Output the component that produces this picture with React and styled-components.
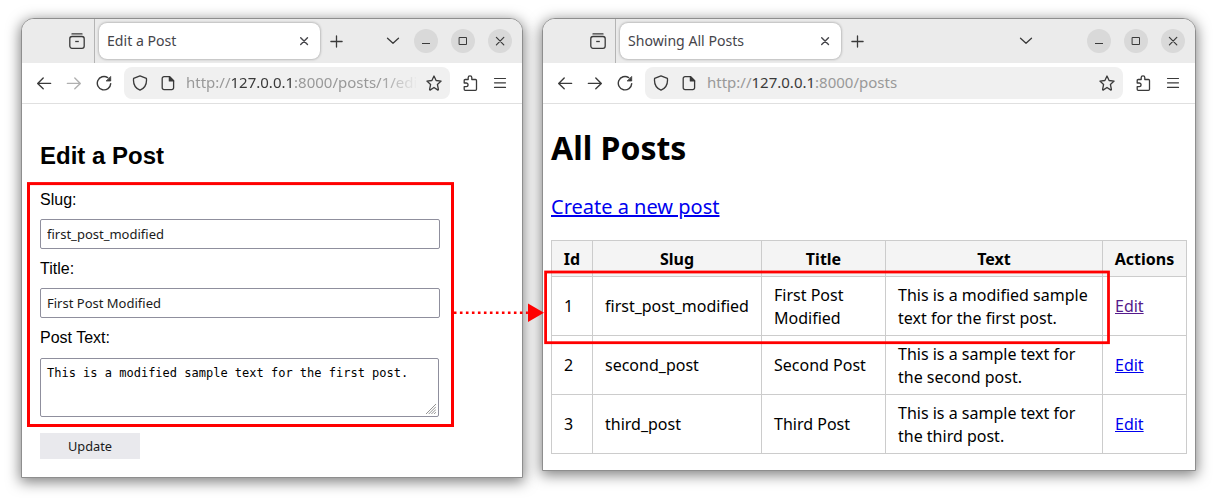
import React from 'react';
import styled, { createGlobalStyle } from 'styled-components';

const GlobalStyle = createGlobalStyle`
  * {
    box-sizing: border-box;
  }
  body {
    margin: 0;
    background: #fff;
    overflow: hidden;
  }
`;

const Desktop = styled.div`
  position: relative;
  display: flex;
  align-items: flex-start;
  gap: 19px;
  width: 1217px;
  height: 502px;
  padding: 18px 0 0 21px;
`;

const Window = styled.section`
  display: flex;
  flex-direction: column;
  width: ${(props) => props.$width}px;
  height: ${(props) => props.$height}px;
  border: 1px solid #8e8e8e;
  border-radius: 13px 13px 0 0;
  background: #fff;
  box-shadow: 0 3px 14px 1px rgba(0, 0, 0, 0.5);
`;

const TitleBar = styled.header`
  display: flex;
  align-items: center;
  height: 44px;
  padding-right: 10px;
  border-radius: 12px 12px 0 0;
  background: #ebebeb;
  color: #3a3a3a;
`;

const ViewButton = styled.div`
  display: flex;
  justify-content: flex-end;
  align-items: center;
  width: 73px;
  height: 44px;
  padding-right: 9px;
  border-right: 1px solid #b4b4b4;
`;

const Tab = styled.div`
  display: flex;
  align-items: center;
  justify-content: space-between;
  width: 221px;
  height: 36px;
  margin: 0 8px 0 4px;
  padding: 0 8px;
  border-radius: 8px;
  background: #fff;
  box-shadow: 0 0 3px rgba(0, 0, 0, 0.4);
  color: #45454a;
  font: 14.1px/20px 'Noto Sans', sans-serif;
`;

const WindowControls = styled.div`
  display: flex;
  align-items: center;
  gap: 13px;
  margin-left: auto;
`;

const TabList = styled.div`
  display: flex;
  margin-right: ${(props) => props.$space}px;
`;

const Circle = styled.div`
  display: flex;
  align-items: center;
  justify-content: center;
  width: 24px;
  height: 24px;
  border-radius: 50%;
  background: #d9d9d9;
`;

const Toolbar = styled.div`
  display: flex;
  align-items: center;
  height: 41px;
  padding: 0 7px;
  border-bottom: 1px solid #e0e0e0;
`;

const ToolButton = styled.div`
  display: flex;
  align-items: center;
  justify-content: center;
  flex: none;
  width: ${(props) => props.$width || 30}px;
  color: ${(props) => (props.$disabled ? '#b0b0b0' : '#3a3a3a')};
`;

const UrlBar = styled.div`
  display: flex;
  align-items: center;
  flex: 1;
  min-width: 0;
  height: 32px;
  margin: 0 5px;
  padding: 0 2px;
  border-radius: 8px;
  background: #f0f0f0;
`;

const Url = styled.div`
  flex: 1;
  min-width: 0;
  margin: 0 2px 2px 4px;
  white-space: nowrap;
  color: #999;
  font: 15px/22px 'Noto Sans', sans-serif;
  mask-image: ${(props) =>
    props.$fade ? 'linear-gradient(to left, transparent, #000 38px)' : 'none'};
`;

const Host = styled.span`
  color: #3a3a3a;
`;

const FormPage = styled.form`
  padding: 38px 0 0 18px;
  color: #000;
  font-family: 'Liberation Sans', Arial, sans-serif;
`;

const FormTitle = styled.h2`
  margin: 0 0 22px;
  font-size: 24px;
  line-height: 27px;
`;

const Field = styled.div`
  display: flex;
  flex-direction: column;
  gap: ${(props) => props.$gap || 10}px;
  margin-bottom: 11px;
`;

const Label = styled.label`
  font-size: 16px;
  line-height: 18px;
`;

const Input = styled.input`
  width: 400px;
  height: 30px;
  padding: 0 6px;
  border: 1px solid #8f8f9d;
  border-radius: 2px;
  background: #fff;
  color: #1a1a1a;
  font: 13px 'Noto Sans', sans-serif;
`;

const TextAreaWrap = styled.div`
  position: relative;
  width: 399px;
  height: 59px;
`;

const TextArea = styled.textarea`
  display: block;
  width: 100%;
  height: 100%;
  padding: 7px 6px;
  border: 1px solid #8f8f9d;
  border-radius: 2px;
  resize: none;
  overflow: hidden;
  color: #000;
  font: 12px/14px 'DejaVu Sans Mono', monospace;
`;

const Grip = styled.svg`
  position: absolute;
  right: 3px;
  bottom: 3px;
`;

const SubmitButton = styled.button`
  width: 100px;
  height: 26px;
  margin-top: 5px;
  padding: 0;
  border: 0;
  background: #e9e9ed;
  color: #1a1a1a;
  font: 12.8px 'Noto Sans', sans-serif;
`;

const ListPage = styled.main`
  padding: 21px 8px 0;
  color: #000;
  font-family: 'Noto Sans', sans-serif;
`;

const PageTitle = styled.h1`
  margin: 0 0 23px;
  font-size: 32px;
  line-height: 45px;
`;

const CreateLink = styled.a`
  display: block;
  width: max-content;
  margin-bottom: 19px;
  color: #0000ee;
  font-size: 20px;
  line-height: 28px;
  text-decoration: underline;
`;

const Table = styled.table`
  width: 636px;
  border-collapse: collapse;
  table-layout: fixed;
  font-size: 16px;
  line-height: 23px;
`;

const Th = styled.th`
  padding: 7px 0 5px;
  border: 1px solid #ccc;
  background: #f4f4f4;
`;

const Td = styled.td`
  padding: ${(props) => (props.$multiline ? '7px 0 5px 12px' : '6px 0 6px 12px')};
  border: 1px solid #ccc;
`;

const EditLink = styled.a`
  color: ${(props) => (props.$visited ? '#551a8b' : '#0000ee')};
  text-decoration: underline;
`;

const Annotations = styled.svg`
  position: absolute;
  left: 0;
  top: 0;
`;

function Icon({ children, size = 16, weight = 1.3 }) {
  return (
    <svg
      width={size}
      height={size}
      viewBox={`0 0 ${size} ${size}`}
      fill="none"
      stroke="currentColor"
      strokeWidth={weight}
      strokeLinecap="round"
      strokeLinejoin="round"
    >
      {children}
    </svg>
  );
}

const CloseIcon = () => (
  <Icon weight={1.4}>
    <path d="M4.7 4.7l6.8 6.8M11.5 4.7l-6.8 6.8" />
  </Icon>
);

function Browser({ title, path, width, height, menuSpace, canForward, fade, children }) {
  return (
    <Window $width={width} $height={height}>
      <TitleBar>
        <ViewButton>
          <Icon>
            <path d="M3 .9h10" />
            <rect x=".8" y="3.5" width="14.4" height="11.8" rx="2.2" />
            <path d="M6.2 8.5h3.6" strokeLinecap="butt" />
          </Icon>
        </ViewButton>
        <Tab>
          <span>{title}</span>
          <CloseIcon />
        </Tab>
        <Icon>
          <path d="M8.5 2.9v11.2M2.9 8.5h11.2" />
        </Icon>
        <WindowControls>
          <TabList $space={menuSpace}>
            <Icon>
              <path d="M2.5 5.3l5.5 5 5.5-5" />
            </Icon>
          </TabList>
          <Circle>
            <Icon weight={1}>
              <path d="M4 10.5h8" strokeLinecap="butt" />
            </Icon>
          </Circle>
          <Circle>
            <Icon weight={1}>
              <path d="M4.5 4.5h7v7h-7z" strokeLinejoin="miter" />
            </Icon>
          </Circle>
          <Circle>
            <Icon weight={1.2}>
              <path d="M4.4 4.4l7.4 7.4M11.8 4.4l-7.4 7.4" />
            </Icon>
          </Circle>
        </WindowControls>
      </TitleBar>
      <Toolbar>
        <ToolButton>
          <Icon weight={1.4}>
            <path d="M14.6 8.4H1.8M7.2 3.1L1.7 8.4l5.5 5.3" />
          </Icon>
        </ToolButton>
        <ToolButton $disabled={!canForward}>
          <Icon weight={1.4}>
            <path d="M1.4 8.4h12.8M8.8 3.1l5.5 5.3-5.5 5.3" />
          </Icon>
        </ToolButton>
        <ToolButton>
          <Icon weight={1.4}>
            <path d="M11.7 2.6A6.7 6.7 0 1 0 14.7 8.6" />
            <path d="M14.7 1.8v4.2h-4.2z" fill="currentColor" strokeWidth="0.8" />
          </Icon>
        </ToolButton>
        <UrlBar>
          <ToolButton $width={28}>
            <Icon>
              <path d="M8 .9l6.4 2.5c.5 4.3-.7 9.3-6.4 11.8C2.3 12.7 1.1 7.7 1.6 3.4z" />
            </Icon>
          </ToolButton>
          <ToolButton $width={28}>
            <Icon>
              <path d="M4 1.7h5.6l4 4v7.1a1.8 1.8 0 0 1-1.8 1.8H4a1.8 1.8 0 0 1-1.8-1.8V3.5A1.8 1.8 0 0 1 4 1.7z" />
              <path d="M9.4 1.7v4.2h4.2z" fill="currentColor" />
            </Icon>
          </ToolButton>
          <Url $fade={fade}>
            http://<Host>127.0.0.1</Host>
            {path}
          </Url>
          <ToolButton $width={28}>
            <Icon>
              <path d="M8 1l2.1 4.5 5 .6-3.7 3.4 1 4.9a.5.5 0 0 1-.8.5L8 12.5l-3.6 2.4a.5.5 0 0 1-.8-.5l1-4.9L.9 6.1l5-.6z" />
            </Icon>
          </ToolButton>
        </UrlBar>
        <ToolButton>
          <Icon>
            <path d="M2.2 8V5.5a1 1 0 0 1 1-1h3V2.6a1.8 1.8 0 0 1 3.6 0v1.9h3.7a1 1 0 0 1 1 1v8.8a1 1 0 0 1-1 1H3.2a1 1 0 0 1-1-1v-2.6h2a1.8 1.8 0 0 0 0-3.7z" />
          </Icon>
        </ToolButton>
        <ToolButton>
          <Icon weight={1.2}>
            <path d="M2.5 3.5h11M2.5 7.8h11M2.5 12.4h11" />
          </Icon>
        </ToolButton>
      </Toolbar>
      {children}
    </Window>
  );
}

const posts = [
  {
    id: 1,
    slug: 'first_post_modified',
    title: ['First Post', 'Modified'],
    text: ['This is a modified sample', 'text for the first post.'],
    visited: true,
  },
  {
    id: 2,
    slug: 'second_post',
    title: ['Second Post'],
    text: ['This is a sample text for', 'the second post.'],
  },
  {
    id: 3,
    slug: 'third_post',
    title: ['Third Post'],
    text: ['This is a sample text for', 'the third post.'],
  },
];

const columns = [
  { name: 'Id', width: 41 },
  { name: 'Slug', width: 169 },
  { name: 'Title', width: 124 },
  { name: 'Text', width: 217 },
  { name: 'Actions', width: 84 },
];

const LinesCell = ({ lines }) => (
  <Td $multiline={lines.length > 1}>
    {lines.map((line) => (
      <div key={line}>{line}</div>
    ))}
  </Td>
);

function EditPost() {
  return (
    <FormPage>
      <FormTitle>Edit a Post</FormTitle>
      <Field>
        <Label>Slug:</Label>
        <Input defaultValue="first_post_modified" spellCheck={false} />
      </Field>
      <Field>
        <Label>Title:</Label>
        <Input defaultValue="First Post Modified" spellCheck={false} />
      </Field>
      <Field $gap={11}>
        <Label>Post Text:</Label>
        <TextAreaWrap>
          <TextArea
            defaultValue="This is a modified sample text for the first post."
            spellCheck={false}
          />
          <Grip width="10" height="10" viewBox="0 0 10 10" stroke="#777" strokeWidth="0.8">
            <path d="M0 10L10 0M2.7 10L10 2.7M5.4 10L10 5.4M8.1 10L10 8.1" />
          </Grip>
        </TextAreaWrap>
      </Field>
      <SubmitButton type="button">Update</SubmitButton>
    </FormPage>
  );
}

function PostList() {
  return (
    <ListPage>
      <PageTitle>All Posts</PageTitle>
      <CreateLink>Create a new post</CreateLink>
      <Table>
        <colgroup>
          {columns.map((column) => (
            <col key={column.name} width={column.width} />
          ))}
        </colgroup>
        <thead>
          <tr>
            {columns.map((column) => (
              <Th key={column.name}>{column.name}</Th>
            ))}
          </tr>
        </thead>
        <tbody>
          {posts.map((post) => (
            <tr key={post.id}>
              <Td>{post.id}</Td>
              <Td>{post.slug}</Td>
              <LinesCell lines={post.title} />
              <LinesCell lines={post.text} />
              <Td>
                <EditLink $visited={post.visited}>Edit</EditLink>
              </Td>
            </tr>
          ))}
        </tbody>
      </Table>
    </ListPage>
  );
}

function App() {
  return (
    <>
      <GlobalStyle />
      <Desktop>
        <Browser
          title="Edit a Post"
          path=":8000/posts/1/edi"
          width={502}
          height={460}
          menuSpace={0}
          fade
        >
          <EditPost />
        </Browser>
        <Browser
          title="Showing All Posts"
          path=":8000/posts"
          width={654}
          height={453}
          menuSpace={40}
          canForward
        >
          <PostList />
        </Browser>
        <Annotations width="1217" height="502" viewBox="0 0 1217 502" fill="none">
          <rect x="28.5" y="183.6" width="424" height="241.9" stroke="#f00" strokeWidth="3" />
          <rect x="545.6" y="272" width="562.9" height="70.7" stroke="#f00" strokeWidth="2.8" />
          <path d="M453.9 312.7h74" stroke="#f00" strokeWidth="2.6" strokeDasharray="2.6 3.4" />
          <path d="M528 303.5v18.4l16-9.2z" fill="#f00" />
        </Annotations>
      </Desktop>
    </>
  );
}

export default App;
